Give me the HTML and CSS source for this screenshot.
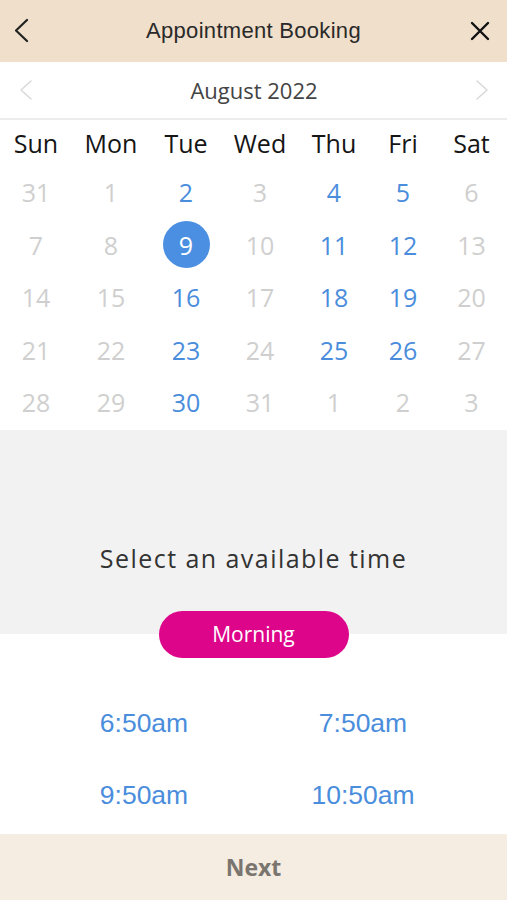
FILE: index.html
```html
<!DOCTYPE html>
<html>
<head>
<meta charset="utf-8">
<link rel="stylesheet" href="styles.css">
</head>
<body>
<div class="app">
  <header class="topbar">
    <span class="icon-btn left">
      <svg width="20" height="30" viewBox="0 0 20 30"><polyline points="12,4 1,14.5 12,25" fill="none" stroke="#222" stroke-width="2.2" stroke-linecap="round" stroke-linejoin="round"/></svg>
    </span>
    <h1 class="title">Appointment Booking</h1>
    <span class="icon-btn right">
      <svg width="22" height="20" viewBox="0 0 22 20"><path d="M2 2 L18 18 M18 2 L2 18" stroke="#111" stroke-width="2.4" stroke-linecap="round"/></svg>
    </span>
  </header>

  <div class="monthbar">
    <span class="mchev">
      <svg width="16" height="22" viewBox="0 0 16 22"><polyline points="12,2 2,11 12,20" fill="none" stroke="#d9d9d9" stroke-width="1.6" stroke-linecap="round" stroke-linejoin="round"/></svg>
    </span>
    <span class="month">August 2022</span>
    <span class="mchev">
      <svg width="16" height="22" viewBox="0 0 16 22"><polyline points="4,2 14,11 4,20" fill="none" stroke="#d9d9d9" stroke-width="1.6" stroke-linecap="round" stroke-linejoin="round"/></svg>
    </span>
  </div>

  <div class="calendar">
    <div class="wd">Sun</div><div class="wd">Mon</div><div class="wd">Tue</div><div class="wd">Wed</div><div class="wd">Thu</div><div class="wd">Fri</div><div class="wd">Sat</div>

    <div class="d off">31</div><div class="d off">1</div><div class="d on">2</div><div class="d off">3</div><div class="d on">4</div><div class="d on">5</div><div class="d off">6</div>
    <div class="d off">7</div><div class="d off">8</div><div class="d sel"><span class="dot">9</span></div><div class="d off">10</div><div class="d on">11</div><div class="d on">12</div><div class="d off">13</div>
    <div class="d off">14</div><div class="d off">15</div><div class="d on">16</div><div class="d off">17</div><div class="d on">18</div><div class="d on">19</div><div class="d off">20</div>
    <div class="d off">21</div><div class="d off">22</div><div class="d on">23</div><div class="d off">24</div><div class="d on">25</div><div class="d on">26</div><div class="d off">27</div>
    <div class="d off">28</div><div class="d off">29</div><div class="d on">30</div><div class="d off">31</div><div class="d off">1</div><div class="d off">2</div><div class="d off">3</div>
  </div>

  <section class="timehead">
    <p class="prompt">Select an available time</p>
  </section>
  <div class="pillwrap"><span class="pill">Morning</span></div>

  <div class="slots">
    <span class="slot">6:50am</span>
    <span class="slot">7:50am</span>
    <span class="slot">9:50am</span>
    <span class="slot">10:50am</span>
  </div>

  <footer class="footer">Next</footer>
</div>
</body>
</html>
```

FILE: styles.css
```css
html, body {
  margin: 0;
  padding: 0;
  background: #ffffff;
}
.app {
  width: 507px;
  height: 900px;
  display: flex;
  flex-direction: column;
  overflow: hidden;
  font-family: "Open Sans", "Noto Sans", sans-serif;
}
.topbar {
  height: 62px;
  background: #efdfcb;
  display: grid;
  grid-template-columns: 1fr auto 1fr;
  align-items: center;
  padding: 0 15px;
  flex: none;
}
.icon-btn {
  display: flex;
  align-items: center;
}
.icon-btn.right {
  justify-content: flex-end;
}
.title {
  margin: 0;
  font-family: "Liberation Sans", Arial, sans-serif;
  font-weight: normal;
  font-size: 22px;
  color: #2a2a2a;
  letter-spacing: 0.3px;
}
.monthbar {
  border-bottom: 2px solid #ececec;
  display: flex;
  align-items: center;
  justify-content: space-between;
  padding: 0 18px 0 19px;
  height: 56px;
  flex: none;
}
.mchev {
  display: flex;
}
.month {
  font-size: 22px;
  color: #444;
}
.calendar {
  display: grid;
  grid-template-columns: 72px 78px 72px 76px 72px 66px 71px;
  grid-auto-rows: 52.5px;
  grid-template-rows: 46px;
  flex: none;
  padding-bottom: 1px;
}
.wd, .d {
  display: flex;
  align-items: center;
  justify-content: center;
  font-size: 25px;
}
.wd {
  color: #151515;
}
.d.off {
  color: #cfcfcf;
}
.d.on {
  color: #4a8ddc;
}
.dot {
  width: 47px;
  height: 47px;
  border-radius: 50%;
  background: #4a8fe1;
  color: #fff;
  display: flex;
  align-items: center;
  justify-content: center;
}
.timehead {
  background: #f2f2f2;
  height: 204px;
  padding-top: 112px;
  box-sizing: border-box;
  flex: none;
}
.prompt {
  margin: 0;
  text-align: center;
  font-size: 25px;
  letter-spacing: 1.45px;
  color: #333;
  line-height: 32px;
}
.pillwrap {
  display: flex;
  justify-content: center;
  margin-top: -23px;
  flex: none;
}
.pill {
  width: 190px;
  height: 47px;
  border-radius: 24px;
  background: #dd058a;
  color: #fff;
  font-size: 21px;
  display: flex;
  align-items: center;
  justify-content: center;
}
.slots {
  display: grid;
  grid-template-columns: 219px 219px;
  grid-auto-rows: 72px;
  justify-content: center;
  margin-top: 30px;
  flex: none;
}
.slot {
  display: flex;
  align-items: center;
  justify-content: center;
  font-family: "Liberation Sans", Arial, sans-serif;
  font-size: 26.5px;
  color: #4a8ddc;
}
.footer {
  margin-top: auto;
  height: 66px;
  background: #f5ece2;
  display: flex;
  align-items: center;
  justify-content: center;
  font-weight: bold;
  font-size: 23px;
  color: #7a756f;
  flex: none;
}
```
